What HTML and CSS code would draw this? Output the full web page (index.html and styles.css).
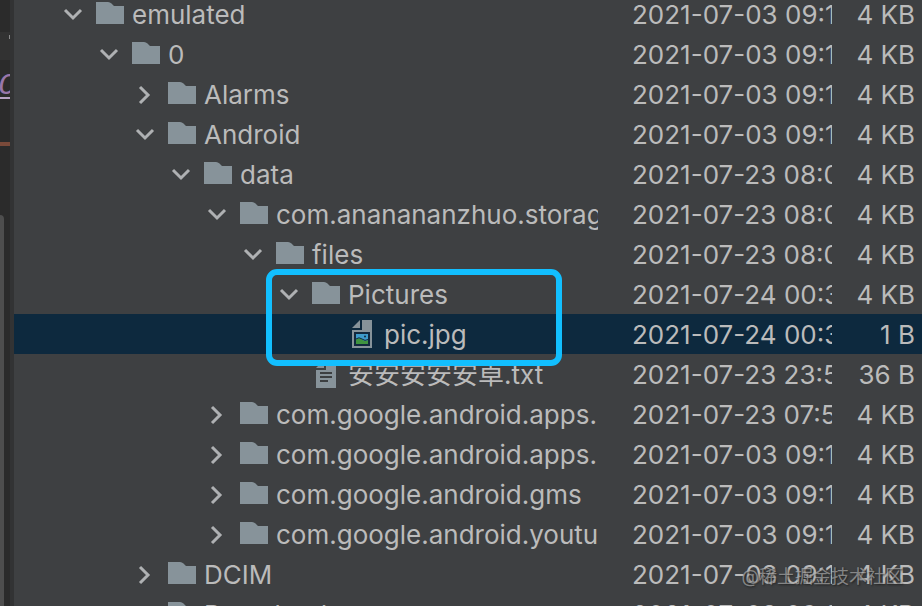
FILE: index.html
```html
<!DOCTYPE html>
<html lang="en">
<head>
<meta charset="utf-8">
<title>Device File Explorer</title>
<link rel="stylesheet" href="styles.css">
</head>
<body>
<svg class="symbols" aria-hidden="true">
  <symbol id="down" viewBox="0 0 28 28"><path d="M5 10l8 8 8-8"/></symbol>
  <symbol id="right" viewBox="0 0 28 28"><path d="M8 7l8 8-8 8"/></symbol>
  <symbol id="folder" viewBox="0 0 28 28"><path d="M0 2h12q2 0 3.500 1.500L18 6h10v18H0z" fill="#87939a"/></symbol>
  <symbol id="image" viewBox="0 0 20 28">
    <path d="M8 0v8H0z" fill="#87939a"/>
    <path d="M10 0h10v28H0V10h10z" fill="#87939a"/>
    <path d="M2 12h16v14H2z" fill="#12293e"/>
    <path d="M4 14h12v10H4z" fill="#3e9bcb"/>
    <path d="M4 19.500q3-2.500 6 0t6 .5v4H4z" fill="#3f9440"/>
    <path d="M4 19q3-2.500 6 0t6 .5" fill="none" stroke="#12293e" stroke-width="1"/>
    <circle cx="13" cy="16.500" r="1" fill="#12293e"/>
  </symbol>
  <symbol id="text" viewBox="0 0 20 28">
    <path d="M8 0v8H0z" fill="#87939a"/>
    <path d="M10 0h10v28H0V10h10z" fill="#87939a"/>
    <path d="M4 13h12M4 17h12M4 21h8" stroke="#3c3f41" stroke-width="2"/>
  </symbol>
</svg>
<div class="window">
  <aside class="editor">
    <div class="line"></div>
    <div class="current"><div class="tick"></div></div>
    <div class="code">C</div>
    <div class="rule"></div>
    <div class="scroll"><div class="thumb"></div></div>
  </aside>
  <main class="explorer">
    <table class="files">
      <colgroup><col><col class="date-col"><col class="size-col"></colgroup>
      <tbody id="rows"></tbody>
    </table>
  </main>
  <div class="watermark">@稀土掘金技术社区</div>
</div>
<script src="tree.js"></script>
</body>
</html>
```
FILE: styles.css
```css
* { box-sizing: border-box; }

body {
  margin: 0;
  background: #3e4042;
  color: #bbbbbb;
  font-family: Inter, "Noto Sans CJK SC", sans-serif;
  font-size: 26px;
  line-height: 42px;
}

.symbols { position: absolute; width: 0; height: 0; }

.window {
  position: relative;
  display: flex;
  height: 100vh;
  overflow: hidden;
}

.editor {
  display: flex;
  flex-direction: column;
  flex: none;
  width: 14px;
  background: #2b2b2b;
  border-right: 4px solid #323334;
  overflow: hidden;
}

.line { height: 32px; }
.current { height: 28px; padding-top: 3px; background: #323232; }
.tick { width: 1px; height: 4px; margin-left: auto; background: #8a8a8a; }

.code {
  height: 39px;
  border-bottom: 2px solid #b9a3c4;
  color: #9876aa;
  font-family: "Liberation Mono", monospace;
  font-size: 30px;
  font-style: italic;
  line-height: 52px;
  text-indent: -2px;
}

.rule { height: 4px; margin-top: 43px; background: #7a4a3a; }
.scroll { flex: 1; margin-top: 69px; }
.thumb { width: 4px; height: 100%; background: #4e4e4e; border-top-right-radius: 4px; }

.explorer { flex: 1; min-width: 0; }

.files {
  width: 100%;
  margin-top: -6px;
  table-layout: fixed;
  border-collapse: collapse;
}

.date-col { width: 234px; }
.size-col { width: 90px; }

td { height: 40px; padding: 0; white-space: nowrap; }
.selected { background: #0d293e; }

.name-cell { position: relative; }

.name {
  display: flex;
  align-items: center;
  gap: 8px;
  height: 40px;
  padding-left: calc(46px + 36px * var(--depth));
  overflow: hidden;
}

.label { height: 40px; }

.toggle {
  flex: none;
  width: 28px;
  height: 28px;
  padding: 0;
  border: 0;
  background: none;
}

.toggle svg {
  display: block;
  width: 28px;
  height: 28px;
  fill: none;
  stroke: #afb1b3;
  stroke-width: 3;
}

.icon { flex: none; width: 28px; height: 28px; }

.date { padding-left: 34px; }
.date div { height: 40px; overflow: hidden; }
.size { padding-right: 7px; text-align: right; }
.size div { height: 40px; }

.highlight {
  position: absolute;
  top: -5px;
  left: 252px;
  z-index: 1;
  width: 296px;
  height: 97px;
  border: 6px solid #12bfff;
  border-radius: 11px;
  pointer-events: none;
}

.watermark {
  position: absolute;
  right: 19px;
  bottom: 16px;
  color: rgba(190, 190, 190, 0.6);
  font-size: 18px;
  line-height: 26px;
  text-shadow: 1px 1px 2px #222222;
}
```
FILE: tree.js
```js
const entries = [
  [0, "down", "folder", "emulated", "2021-07-03 09:12", "4 KB"],
  [1, "down", "folder", "0", "2021-07-03 09:12", "4 KB"],
  [2, "right", "folder", "Alarms", "2021-07-03 09:12", "4 KB"],
  [2, "down", "folder", "Android", "2021-07-03 09:12", "4 KB"],
  [3, "down", "folder", "data", "2021-07-23 08:00", "4 KB"],
  [4, "down", "folder", "com.ananananzhuo.storage", "2021-07-23 08:00", "4 KB"],
  [5, "down", "folder", "files", "2021-07-23 08:00", "4 KB"],
  [6, "down", "folder", "Pictures", "2021-07-24 00:30", "4 KB"],
  [7, "", "image", "pic.jpg", "2021-07-24 00:30", "1 B"],
  [6, "", "text", "安安安安安卓.txt", "2021-07-23 23:50", "36 B"],
  [4, "right", "folder", "com.google.android.apps.", "2021-07-23 07:50", "4 KB"],
  [4, "right", "folder", "com.google.android.apps.", "2021-07-03 09:12", "4 KB"],
  [4, "right", "folder", "com.google.android.gms", "2021-07-03 09:12", "4 KB"],
  [4, "right", "folder", "com.google.android.youtube", "2021-07-03 09:12", "4 KB"],
  [2, "right", "folder", "DCIM", "2021-07-03 09:12", "4 KB"],
  [2, "right", "folder", "Download", "2021-07-03 09:12", "4 KB"]
];

document.getElementById("rows").innerHTML = entries.map(([depth, arrow, icon, name, date, size]) => `
  <tr class="${name === "pic.jpg" ? "selected" : ""}">
    <td class="name-cell">
      <div class="name" style="--depth: ${depth}">
        ${arrow
          ? `<button class="toggle" aria-label="Toggle ${name}"><svg><use href="#${arrow}"/></svg></button>`
          : `<span class="toggle"></span>`}
        <svg class="icon"><use href="#${icon}"/></svg>
        <span class="label">${name}</span>
      </div>
      ${name === "Pictures" ? `<div class="highlight"></div>` : ""}
    </td>
    <td class="date"><div>${date}</div></td>
    <td class="size"><div>${size}</div></td>
  </tr>`).join("");
```
